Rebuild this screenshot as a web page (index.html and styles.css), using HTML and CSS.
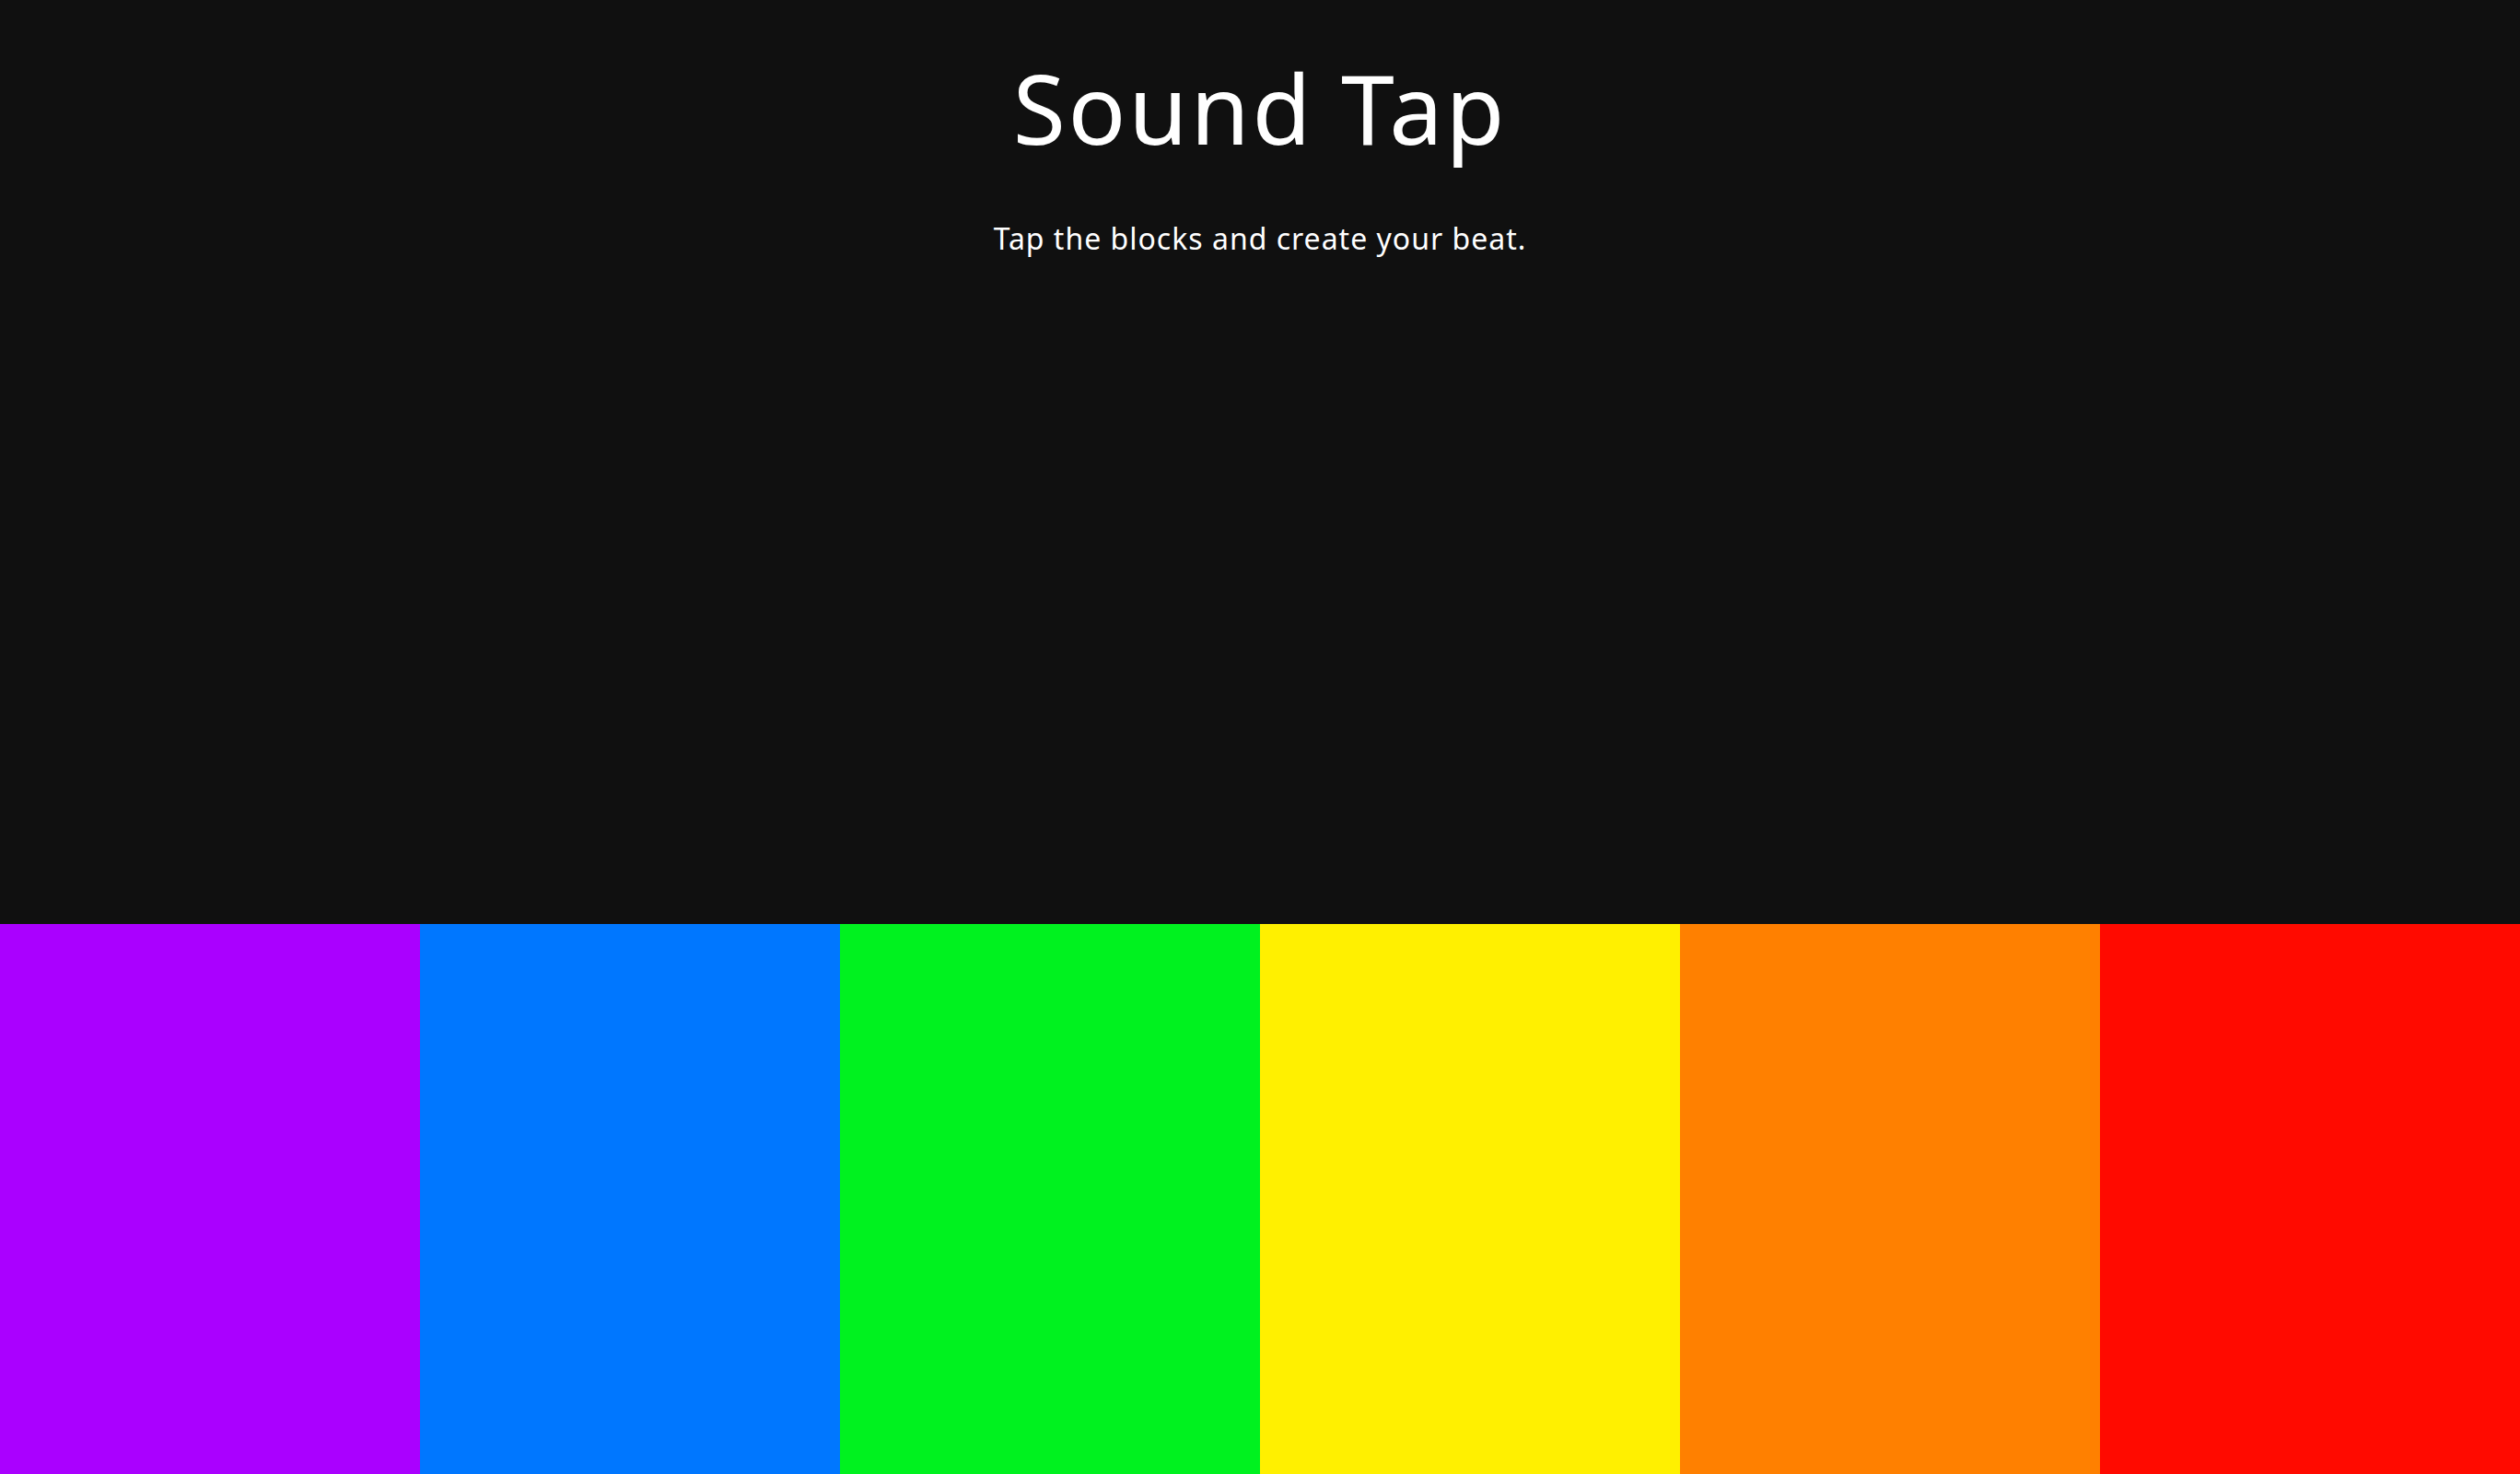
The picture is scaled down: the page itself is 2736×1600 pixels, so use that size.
FILE: index.html
```html
<!DOCTYPE html>
<html lang="en">
<head>
<meta charset="utf-8">
<title>Sound Tap</title>
<link rel="stylesheet" href="styles.css">
</head>
<body>
<div class="app">
  <header class="intro">
    <h1 class="title">Sound Tap</h1>
    <p class="subtitle">Tap the blocks and create your beat.</p>
  </header>
  <section class="pads">
    <div class="pad pad-purple"></div>
    <div class="pad pad-blue"></div>
    <div class="pad pad-green"></div>
    <div class="pad pad-yellow"></div>
    <div class="pad pad-orange"></div>
    <div class="pad pad-red"></div>
  </section>
</div>
</body>
</html>
```

FILE: styles.css
```css
html, body {
  margin: 0;
  padding: 0;
  height: 100%;
}
body {
  background: #101010;
  color: #ffffff;
  font-family: "Noto Sans", "DejaVu Sans", sans-serif;
}
.app {
  height: 100vh;
  display: flex;
  flex-direction: column;
}
.intro {
  flex: 1;
  display: flex;
  flex-direction: column;
  align-items: center;
  padding-top: 65px;
}
.title {
  margin: 0;
  font-size: 104px;
  line-height: 1;
  font-weight: 400;
  letter-spacing: 2.8px;
}
.subtitle {
  margin: 0;
  margin-top: 74px;
  font-size: 32px;
  line-height: 1;
  letter-spacing: 1px;
}
.pads {
  height: 597px;
  display: grid;
  grid-template-columns: repeat(6, 1fr);
}
.pad-purple { background: #aa00ff; }
.pad-blue { background: #0077ff; }
.pad-green { background: #00f21f; }
.pad-yellow { background: #fff000; }
.pad-orange { background: #ff8000; }
.pad-red { background: #ff0a00; }
```
